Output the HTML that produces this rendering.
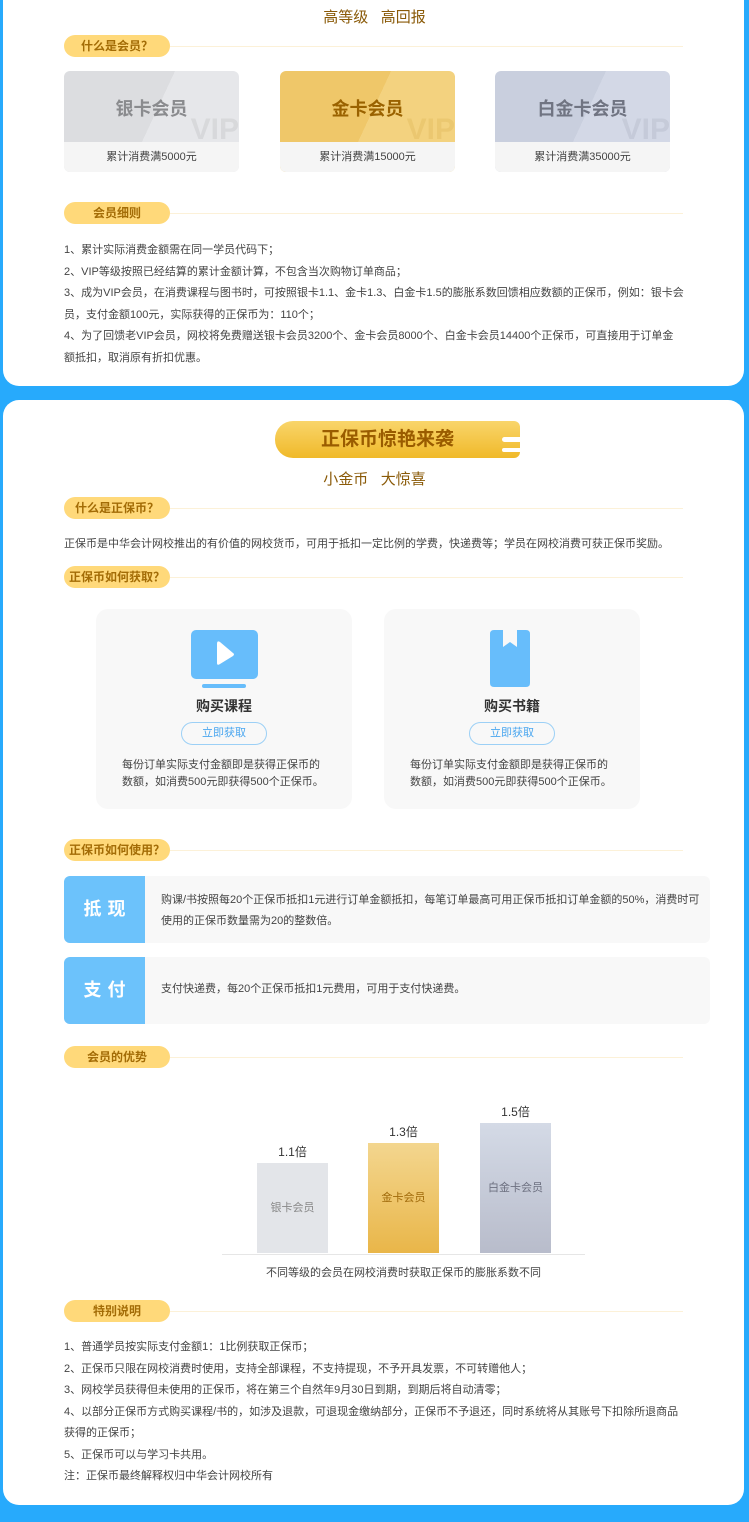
<!DOCTYPE html>
<html><head><meta charset="utf-8"><style>
*{margin:0;padding:0;box-sizing:border-box}
body{width:749px;height:1522px;background:#27aafc;font-family:"Liberation Sans","Noto Sans CJK SC",sans-serif;position:relative;overflow:hidden;color:#333}
.panel{position:absolute;left:3px;width:741px;background:#fff}
.a{position:absolute}
.tag{position:absolute;left:64px;width:106px;height:22px;border-radius:11px;background:#ffd97a;color:#a36c06;font-weight:bold;font-size:12px;text-align:center;line-height:22px}
.tline{position:absolute;left:170px;width:513px;height:1px;background:#fcf1d8}
.card{position:absolute;top:71px;width:175px;height:101px;border-radius:6px;overflow:hidden}
.card .t{position:absolute;top:0;left:0;right:0;height:71px;text-align:center;line-height:76px;font-size:18px;font-weight:bold}
.card .v{position:absolute;right:0;top:44px;font-size:30px;font-weight:bold;opacity:.18;line-height:30px}
.card .b{position:absolute;top:71px;left:0;right:0;height:30px;background:#f5f5f5;text-align:center;font-size:11px;line-height:30px;color:#444}
.p{font-size:11px;color:#444;position:absolute;left:64px}
.gc{position:absolute;top:609px;width:256px;height:200px;background:#f8f8f8;border-radius:12px;text-align:center}
.gc h4{position:absolute;top:87px;width:100%;font-size:14px;color:#333}
.gc .btn{position:absolute;top:113px;left:85px;width:86px;height:23px;border:1px solid #9cd0f6;border-radius:12px;color:#4aa6ef;font-size:11px;line-height:21px}
.gc p{position:absolute;top:148px;left:26px;right:26px;font-size:11px;line-height:17px;text-align:left;color:#444}
.row{position:absolute;left:64px;width:646px;height:67px;background:#f8f8f8;border-radius:6px;overflow:hidden}
.row .l{position:absolute;left:0;top:0;width:81px;height:100%;background:#6cc2fb;color:#fff;font-weight:bold;font-size:18px;text-align:center;line-height:67px;letter-spacing:6px;padding-left:6px}
.row .r{position:absolute;left:97px;right:10px;font-size:11px;line-height:21px;color:#444}
.bar{position:absolute;width:71px;text-align:center;font-size:11px}
.lab{position:absolute;width:71px;text-align:center;font-size:12px;color:#333}
</style></head><body>
<div class="panel" style="top:-20px;height:406px;border-radius:0 0 16px 16px"></div>
<div class="panel" style="top:400px;height:1105px;border-radius:16px"></div>

<div class="a" style="top:6px;left:0;width:749px;text-align:center;font-size:15px;color:#8a5a08">高等级&nbsp;&nbsp;&nbsp;高回报</div>
<div class="tag" style="top:35px">什么是会员？</div><div class="tline" style="top:46px"></div>

<div class="card" style="left:64px;background:linear-gradient(115deg,#dcdde0 50%,#e6e7ea 50%)"><div class="t" style="color:#8a8b8e">银卡会员</div><div class="v" style="color:#999">VIP</div><div class="b">累计消费满5000元</div></div>
<div class="card" style="left:280px;background:linear-gradient(115deg,#efc769 50%,#f3d27f 50%)"><div class="t" style="color:#9a6200">金卡会员</div><div class="v" style="color:#c99a30">VIP</div><div class="b">累计消费满15000元</div></div>
<div class="card" style="left:495px;background:linear-gradient(115deg,#c9cfde 50%,#d3d8e6 50%)"><div class="t" style="color:#707482">白金卡会员</div><div class="v" style="color:#8a8ea0">VIP</div><div class="b">累计消费满35000元</div></div>

<div class="tag" style="top:202px">会员细则</div><div class="tline" style="top:213px"></div>
<div class="p" style="top:240px;line-height:21.5px;width:620px">1、累计实际消费金额需在同一学员代码下；<br>2、VIP等级按照已经结算的累计金额计算，不包含当次购物订单商品；<br>3、成为VIP会员，在消费课程与图书时，可按照银卡1.1、金卡1.3、白金卡1.5的膨胀系数回馈相应数额的正保币，例如：银卡会员，支付金额100元，实际获得的正保币为：110个；<br>4、为了回馈老VIP会员，网校将免费赠送银卡会员3200个、金卡会员8000个、白金卡会员14400个正保币，可直接用于订单金额抵扣，取消原有折扣优惠。</div>

<div class="a" style="top:421px;left:275px;width:245px;height:37px;border-radius:18px 6px 6px 18px;background:linear-gradient(#f9d56b,#f0b929);color:#9a5c00;font-size:19px;font-weight:bold;text-align:center;line-height:37px;padding-right:20px">正保币惊艳来袭</div>
<div class="a" style="top:437px;left:502px;width:28px;height:5px;background:#fff;border-radius:3px"></div>
<div class="a" style="top:448px;left:502px;width:20px;height:4px;background:#fff;border-radius:2px"></div>
<div class="a" style="top:468px;left:0;width:749px;text-align:center;font-size:15px;color:#8a5a08">小金币&nbsp;&nbsp;&nbsp;大惊喜</div>

<div class="tag" style="top:497px">什么是正保币？</div><div class="tline" style="top:508px"></div>
<div class="p" style="top:535px">正保币是中华会计网校推出的有价值的网校货币，可用于抵扣一定比例的学费，快递费等；学员在网校消费可获正保币奖励。</div>
<div class="tag" style="top:566px">正保币如何获取？</div><div class="tline" style="top:577px"></div>

<div class="gc" style="left:96px">
<div class="a" style="left:95px;top:21px;width:67px;height:49px;background:#67bdfb;border-radius:5px"></div>
<svg class="a" style="left:95px;top:21px" width="67" height="49"><path d="M26 14 L26 33 Q26 36 29 34 L42 26 Q44 24 42 23 L29 12 Q26 10 26 14Z" fill="#fff"/></svg>
<div class="a" style="left:106px;top:75px;width:44px;height:4px;background:#67bdfb;border-radius:2px"></div>
<h4>购买课程</h4><div class="btn">立即获取</div><p>每份订单实际支付金额即是获得正保币的数额，如消费500元即获得500个正保币。</p></div>

<div class="gc" style="left:384px">
<svg class="a" style="left:106px;top:21px" width="40" height="57"><path d="M4 0 H36 Q40 0 40 4 V53 Q40 57 36 57 H4 Q0 57 0 53 V4 Q0 0 4 0Z" fill="#67bdfb"/><path d="M13 0 V17 L20 12 L27 17 V0Z" fill="#f8f8f8"/></svg>
<h4>购买书籍</h4><div class="btn">立即获取</div><p>每份订单实际支付金额即是获得正保币的数额，如消费500元即获得500个正保币。</p></div>

<div class="tag" style="top:839px">正保币如何使用？</div><div class="tline" style="top:850px"></div>
<div class="row" style="top:876px"><div class="l">抵现</div><div class="r" style="top:14px">购课/书按照每20个正保币抵扣1元进行订单金额抵扣，每笔订单最高可用正保币抵扣订单金额的50%，消费时可使用的正保币数量需为20的整数倍。</div></div>
<div class="row" style="top:957px"><div class="l">支付</div><div class="r" style="top:22px">支付快递费，每20个正保币抵扣1元费用，可用于支付快递费。</div></div>

<div class="tag" style="top:1046px">会员的优势</div><div class="tline" style="top:1057px"></div>
<div class="lab" style="left:257px;top:1143px">1.1倍</div>
<div class="lab" style="left:368px;top:1123px">1.3倍</div>
<div class="lab" style="left:480px;top:1103px">1.5倍</div>
<div class="bar" style="left:257px;top:1163px;height:90px;background:#e3e5e9;color:#888;line-height:90px">银卡会员</div>
<div class="bar" style="left:368px;top:1143px;height:110px;background:linear-gradient(#f3d68f,#e9b649);color:#a06a0a;line-height:110px">金卡会员</div>
<div class="bar" style="left:480px;top:1123px;height:130px;background:linear-gradient(#d4dae6,#b8bccb);color:#6d7080;line-height:130px">白金卡会员</div>
<div class="a" style="left:222px;top:1254px;width:363px;height:1px;background:#e6e6e6"></div>
<div class="a" style="left:222px;width:363px;top:1264px;text-align:center;font-size:11px;color:#444">不同等级的会员在网校消费时获取正保币的膨胀系数不同</div>

<div class="tag" style="top:1300px">特别说明</div><div class="tline" style="top:1311px"></div>
<div class="p" style="top:1337px;line-height:21.5px;width:620px">1、普通学员按实际支付金额1：1比例获取正保币；<br>2、正保币只限在网校消费时使用，支持全部课程，不支持提现，不予开具发票，不可转赠他人；<br>3、网校学员获得但未使用的正保币，将在第三个自然年9月30日到期，到期后将自动清零；<br>4、以部分正保币方式购买课程/书的，如涉及退款，可退现金缴纳部分，正保币不予退还，同时系统将从其账号下扣除所退商品获得的正保币；<br>5、正保币可以与学习卡共用。<br>注：正保币最终解释权归中华会计网校所有</div>
</body></html>
